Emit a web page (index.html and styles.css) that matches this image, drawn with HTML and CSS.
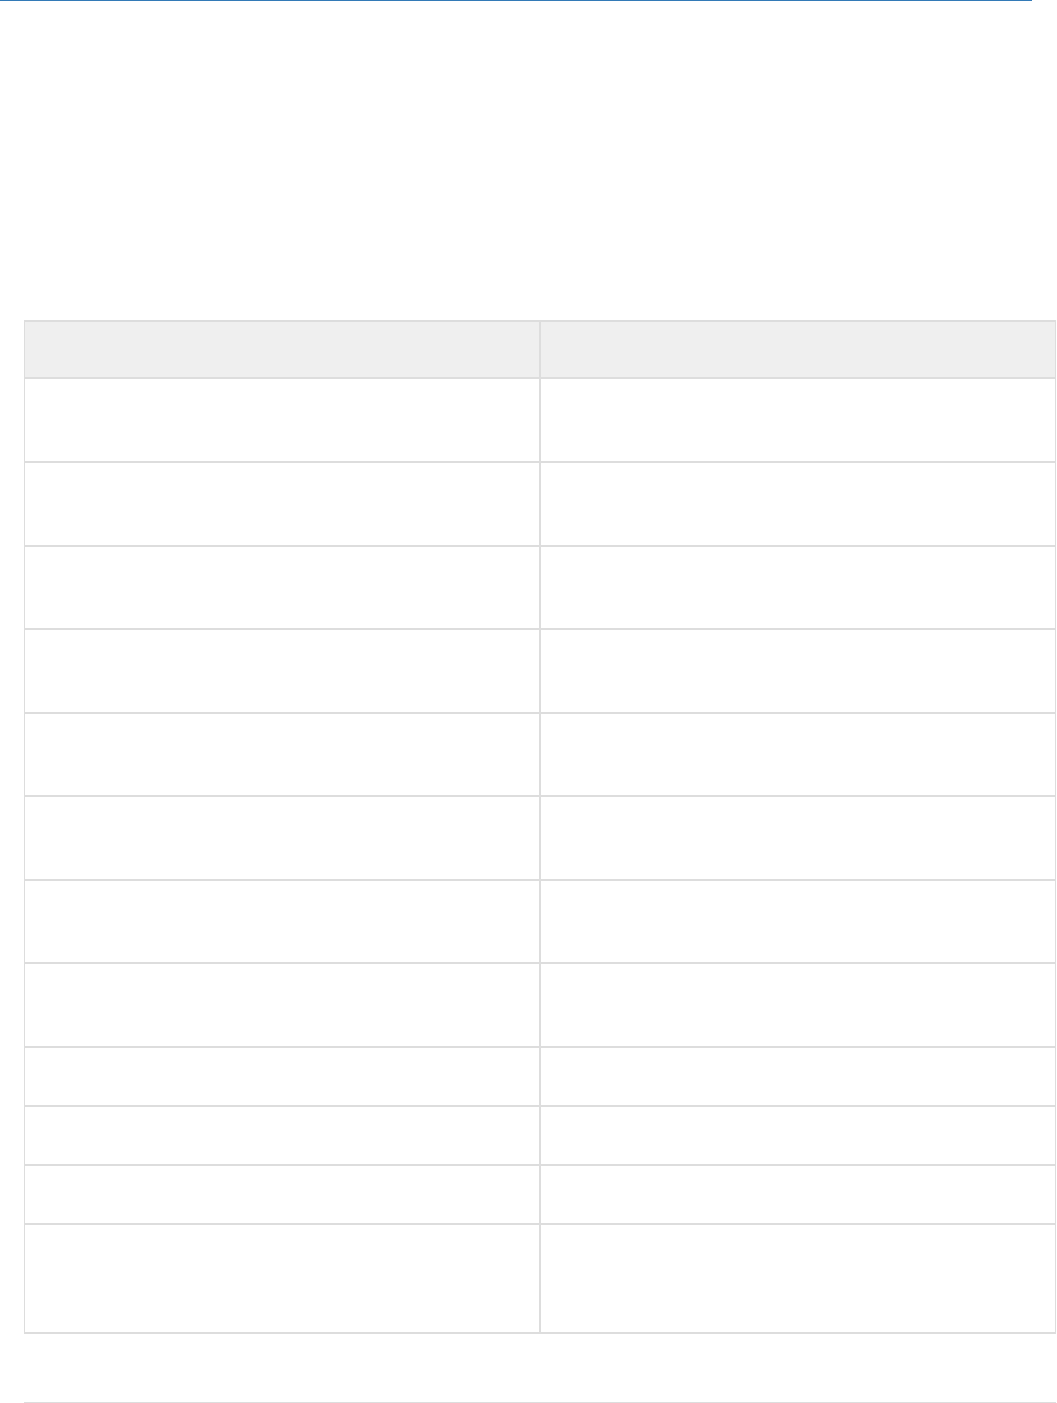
FILE: index.html
```html
<!DOCTYPE html>
<html lang="en">
<head>
<meta charset="utf-8">
<title>Table</title>
<link rel="stylesheet" href="styles.css">
</head>
<body>
<div class="topbar"></div>
<main class="content">
  <table class="grid">
    <thead>
      <tr><th><div class="cell head"></div></th><th><div class="cell head"></div></th></tr>
    </thead>
    <tbody>
      <tr><td><div class="cell tall"></div></td><td><div class="cell tall"></div></td></tr>
      <tr><td><div class="cell tall"></div></td><td><div class="cell tall"></div></td></tr>
      <tr><td><div class="cell tall-b"></div></td><td><div class="cell tall-b"></div></td></tr>
      <tr><td><div class="cell tall"></div></td><td><div class="cell tall"></div></td></tr>
      <tr><td><div class="cell tall-b"></div></td><td><div class="cell tall-b"></div></td></tr>
      <tr><td><div class="cell tall"></div></td><td><div class="cell tall"></div></td></tr>
      <tr><td><div class="cell tall-b"></div></td><td><div class="cell tall-b"></div></td></tr>
      <tr><td><div class="cell tall"></div></td><td><div class="cell tall"></div></td></tr>
      <tr><td><div class="cell short"></div></td><td><div class="cell short"></div></td></tr>
      <tr><td><div class="cell short"></div></td><td><div class="cell short"></div></td></tr>
      <tr><td><div class="cell short"></div></td><td><div class="cell short"></div></td></tr>
      <tr><td><div class="cell last"></div></td><td><div class="cell last"></div></td></tr>
    </tbody>
  </table>
  <hr class="rule">
</main>
</body>
</html>
```
FILE: styles.css
```css
html, body {
  margin: 0;
  padding: 0;
  background: #ffffff;
  font-family: "Liberation Sans", Arial, sans-serif;
}
.topbar {
  width: 1032px;
  height: 1px;
  background: #337ab7;
}
.content {
  padding: 319px 0 0 24px;
}
.grid {
  width: 1032px;
  table-layout: fixed;
  border-collapse: separate;
  border-spacing: 0;
  border-top: 1px solid #dddddd;
  border-bottom: 1px solid #dddddd;
}
.grid th, .grid td {
  padding: 0;
  border: 1px solid #dddddd;
}
.grid th {
  background: #efefef;
}
.cell.head { height: 55px; }
.cell.tall { height: 82px; }
.cell.tall-b { height: 81px; }
.cell.short { height: 57px; }
.cell.last { height: 107px; }
.rule {
  width: 1032px;
  margin: 68px 0 0 0;
  border: 0;
  border-top: 1px solid #dddddd;
  height: 0;
}
```
